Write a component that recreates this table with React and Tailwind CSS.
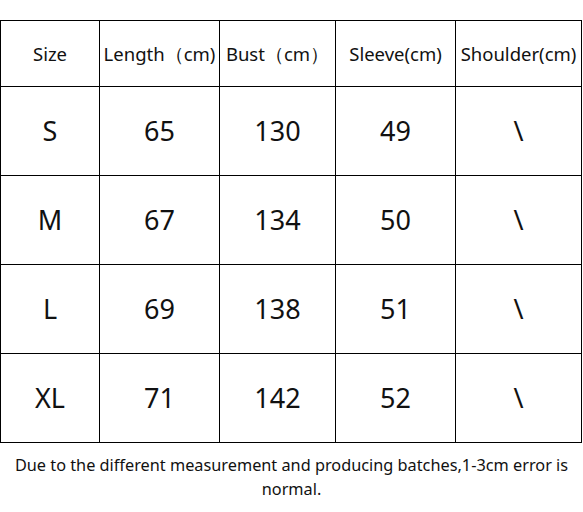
const headers = ['Size', 'Length（cm)', 'Bust（cm）', 'Sleeve(cm)', 'Shoulder(cm)']
const rows = [
  ['S', '65', '130', '49', '\\'],
  ['M', '67', '134', '50', '\\'],
  ['L', '69', '138', '51', '\\'],
  ['XL', '71', '142', '52', '\\'],
]
const widths = ['w-[99px]', 'w-[120px]', 'w-[116px]', 'w-[120px]', 'w-[126px]']

export default function App() {
  return (
    <div className="w-[583px] h-[512px] bg-white text-[#111] font-['Noto_Sans','Open_Sans',sans-serif] pt-[20px]">
      <table className="table-fixed border-collapse w-[582px]">
        <thead>
          <tr className="h-[66px]">
            {headers.map((h, i) => (
              <th key={i} className={`${widths[i]} border border-black font-normal text-[18.5px] whitespace-nowrap overflow-visible p-0 text-center`}>
                {h}
              </th>
            ))}
          </tr>
        </thead>
        <tbody>
          {rows.map((r, ri) => (
            <tr key={ri} className="h-[89px]">
              {r.map((c, ci) => (
                <td key={ci} className="border border-black text-[27px] text-center p-0">
                  {c}
                </td>
              ))}
            </tr>
          ))}
        </tbody>
      </table>
      <p className="mt-[10px] px-[8px] text-center text-[16.3px] leading-[24px]">
        Due to the different measurement and producing batches,1-3cm error is normal.
      </p>
    </div>
  )
}
